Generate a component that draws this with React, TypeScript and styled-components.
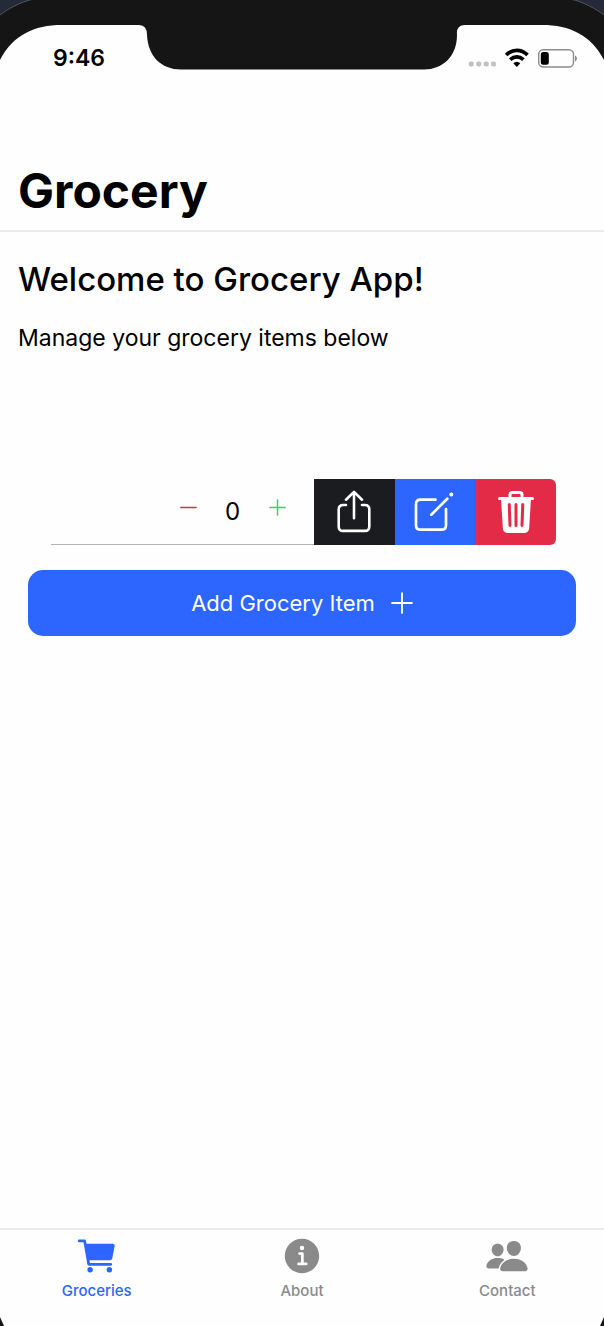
import React, { useState } from "react";
import styled, { createGlobalStyle } from "styled-components";
import { IoCart, IoInformationCircle, IoPeople, IoTrash } from "react-icons/io5";

const color = {
  blue: "#2d66ff",
  red: "#e32b47",
  green: "#2dd36f",
  dark: "#1b1c1f",
  bezel: "#151515",
  muted: "#8a8a8a",
};

const GlobalStyle = createGlobalStyle`
  *, *::before, *::after { box-sizing: border-box; }
  body {
    margin: 0;
    background: #fefefe;
    color: #000;
    font-family: Inter, "Liberation Sans", sans-serif;
  }
  button, input { font: inherit; color: inherit; }
`;

const Screen = styled.div`
  position: relative;
  display: flex;
  flex-direction: column;
  min-height: 100vh;
  overflow: hidden;
`;

const Bezel = styled.div`
  position: absolute;
  top: 0;
  left: 0;
  right: 0;
  height: 25px;
  display: flex;
  justify-content: space-between;
  background: ${color.bezel};
  svg { display: block; flex: none; overflow: visible; }
`;

const BottomCorner = styled.svg<{ $side: "left" | "right" }>`
  position: absolute;
  bottom: 0;
  ${({ $side }) => ($side === "left" ? "left: 0;" : "right: 0; transform: scaleX(-1);")}
`;

const StatusBar = styled.div`
  display: flex;
  justify-content: space-between;
  align-items: center;
  height: 116px;
  padding: 0 26px 0 53px;
  svg { display: block; }
`;

const Time = styled.time`
  font-size: 23px;
  font-weight: 600;
  line-height: 28px;
`;

const Header = styled.header`
  border-bottom: 2px solid #ebebec;
`;

const Title = styled.h1`
  margin: 0;
  padding: 44px 18px 8px;
  font-size: 48px;
  line-height: 62px;
  font-weight: 700;
`;

const Main = styled.main`
  flex: 1;
  padding: 24px 18px;
`;

const Welcome = styled.h2`
  margin: 0;
  font-size: 33px;
  line-height: 46px;
  font-weight: 500;
`;

const Intro = styled.p`
  margin: 20px 0 0;
  font-size: 23px;
  line-height: 32px;
`;

const List = styled.ul`
  list-style: none;
  margin: 125px 30px 0 33px;
  padding: 0;
`;

const Item = styled.li`
  display: flex;
  height: 66px;
`;

const ItemFields = styled.div`
  flex: 1;
  min-width: 0;
  display: flex;
  align-items: center;
  padding-right: 15px;
  border-bottom: 1px solid #b4b4b8;
`;

const NameInput = styled.input`
  flex: 1;
  min-width: 0;
  height: 100%;
  padding: 0;
  border: 0;
  outline: 0;
  background: transparent;
  font-size: 23px;
`;

const StepButton = styled.button<{ $tint: string }>`
  display: grid;
  place-items: center;
  width: 44px;
  height: 44px;
  margin-bottom: 8px;
  padding: 0;
  border: 0;
  background: transparent;
  color: ${({ $tint }) => $tint};
`;

const Quantity = styled.output`
  width: 45px;
  font-size: 24px;
  line-height: 32px;
  text-align: center;
`;

const Actions = styled.div`
  flex: none;
  display: grid;
  grid-template-columns: repeat(3, 1fr);
  width: 242px;
  border-radius: 0 6px 6px 0;
  overflow: hidden;
`;

const ActionButton = styled.button<{ $bg: string }>`
  display: grid;
  place-items: center;
  padding: 0;
  border: 0;
  background: ${({ $bg }) => $bg};
  color: #fff;
  svg { display: block; width: 48px; height: 48px; }
`;

const AddButton = styled.button`
  display: flex;
  align-items: center;
  justify-content: center;
  gap: 16px;
  width: calc(100% - 20px);
  height: 66px;
  margin: 25px 10px 0;
  border: 0;
  border-radius: 15px;
  background: ${color.blue};
  color: #fff;
  font-size: 22px;
  line-height: 32px;
`;

const TabBar = styled.nav`
  display: grid;
  grid-template-columns: repeat(3, 1fr);
  column-gap: 12px;
  height: 98px;
  border-top: 2px solid #ebebec;
`;

const Tab = styled.a<{ $active?: boolean }>`
  display: flex;
  flex-direction: column;
  align-items: center;
  gap: 3px;
  padding-top: 4px;
  font-size: 15px;
  line-height: 20px;
  font-weight: 500;
  text-decoration: none;
  color: ${({ $active }) => ($active ? color.blue : color.muted)};
  svg { display: block; width: 44px; height: 44px; }
`;

const CornerShape = () => (
  <>
    <path d="M0 0H70V25H62C34 25 13 35 0 60Z" fill={color.bezel} />
    <path d="M0 0H33C20 3 8 9 0 15Z" fill="#242a37" />
    <path d="M33 -1C20 2 8 9 0 15" fill="none" stroke="#505256" />
  </>
);

const DeviceBezel = () => (
  <Bezel aria-hidden="true">
    <svg width="70" height="62" viewBox="0 0 70 62"><CornerShape /></svg>
    <svg width="328" height="70" viewBox="0 0 328 70">
      <path
        d="M0 0H328V25H327Q318 25 319 35C319 56 305 69.500 286 69.500H43C23 69.500 10 56 9 35Q9 25 1 25H0Z"
        fill={color.bezel}
      />
    </svg>
    <svg width="70" height="62" viewBox="0 0 70 62">
      <g transform="matrix(-1 0 0 1 70 0)"><CornerShape /></g>
    </svg>
  </Bezel>
);

const StatusIcons = () => (
  <svg width="110" height="20" viewBox="0 0 110 20" role="img" aria-label="Signal, Wi-Fi and battery">
    <g fill="#c2c2c3">
      <rect x="0.700" y="13.500" width="5" height="5" rx="1.800" />
      <rect x="8.200" y="13.500" width="5" height="5" rx="1.800" />
      <rect x="15.700" y="13.500" width="5" height="5" rx="1.800" />
      <rect x="23" y="13.500" width="5" height="5" rx="1.800" />
    </g>
    <g fill="none" stroke="#000" strokeWidth="3.700">
      <path d="M38.200 7C44.300 .8 53.300 .8 59.500 7" />
      <path d="M42.200 11.600C46.300 8 51.300 8 55.400 11.600" />
    </g>
    <path d="M45.300 15.300C47.500 13.300 50.100 13.300 52.300 15.300L48.800 19Z" />
    <rect x="70.700" y="1.700" width="34.800" height="17.300" rx="4.500" fill="none" stroke="#8c8c8c" strokeWidth="1.400" />
    <rect x="72.800" y="4" width="8" height="12.700" rx="2.500" />
    <path d="M107 7.500C109.600 8.500 109.600 12.500 107 13.500Z" fill="#8c8c8c" />
  </svg>
);

const Plus = ({ size, stroke }: { size: number; stroke: number }) => (
  <svg width={size} height={size} viewBox="0 0 20 20" fill="none" stroke="currentColor" strokeWidth={stroke} strokeLinecap="round" aria-hidden="true">
    <path d="M1 10H19M10 1V19" />
  </svg>
);

const Minus = () => (
  <svg width="17" height="17" viewBox="0 0 20 20" fill="none" stroke="currentColor" strokeWidth="1.700" strokeLinecap="round" aria-hidden="true">
    <path d="M1 10H19" />
  </svg>
);

const ShareIcon = () => (
  <svg viewBox="0 0 48 48" fill="none" stroke="currentColor" strokeWidth="2.600" strokeLinecap="round" strokeLinejoin="round" aria-hidden="true">
    <path d="M16 17H13.200Q8.700 17 8.700 21.500V38.400Q8.700 42.900 13.200 42.900H34.800Q39.300 42.900 39.300 38.400V21.500Q39.300 17 34.800 17H32" />
    <path d="M24 30.300V4.200M16 11.700L24 3.900L32 11.700" />
  </svg>
);

const EditIcon = () => (
  <svg viewBox="0 0 48 48" fill="none" stroke="currentColor" strokeWidth="2.700" strokeLinecap="round" strokeLinejoin="round" aria-hidden="true">
    <path d="M24.500 11.700H9.500Q5 11.700 5 16.200V37.200Q5 41.700 9.500 41.700H30.500Q35 41.700 35 37.200V21" />
    <path d="M36.300 10.700L20.300 26.700" />
    <circle cx="40.300" cy="6.600" r="2" fill="currentColor" stroke="none" />
  </svg>
);

export default function App() {
  const [name, setName] = useState("");
  const [count, setCount] = useState(0);

  return (
    <>
      <GlobalStyle />
      <Screen>
        <Header>
          <StatusBar>
            <Time>9:46</Time>
            <StatusIcons />
          </StatusBar>
          <Title>Grocery</Title>
        </Header>
        <Main>
          <Welcome>Welcome to Grocery App!</Welcome>
          <Intro>Manage your grocery items below</Intro>
          <List>
            <Item>
              <ItemFields>
                <NameInput aria-label="Item name" value={name} onChange={(e) => setName(e.target.value)} />
                <StepButton type="button" $tint={color.red} aria-label="Decrease" onClick={() => setCount(Math.max(0, count - 1))}>
                  <Minus />
                </StepButton>
                <Quantity>{count}</Quantity>
                <StepButton type="button" $tint={color.green} aria-label="Increase" onClick={() => setCount(count + 1)}>
                  <Plus size={17} stroke={1.7} />
                </StepButton>
              </ItemFields>
              <Actions>
                <ActionButton type="button" $bg={color.dark} aria-label="Share"><ShareIcon /></ActionButton>
                <ActionButton type="button" $bg={color.blue} aria-label="Edit"><EditIcon /></ActionButton>
                <ActionButton type="button" $bg={color.red} aria-label="Delete"><IoTrash /></ActionButton>
              </Actions>
            </Item>
          </List>
          <AddButton type="button">
            Add Grocery Item
            <Plus size={22} stroke={1.7} />
          </AddButton>
        </Main>
        <TabBar aria-label="Main">
          <Tab href="#groceries" $active><IoCart />Groceries</Tab>
          <Tab href="#about"><IoInformationCircle />About</Tab>
          <Tab href="#contact"><IoPeople />Contact</Tab>
        </TabBar>
        <DeviceBezel />
        <BottomCorner $side="left" width="4" height="9" viewBox="0 0 4 9" aria-hidden="true">
          <path d="M0 0L4 9H0Z" fill={color.bezel} />
        </BottomCorner>
        <BottomCorner $side="right" width="4" height="9" viewBox="0 0 4 9" aria-hidden="true">
          <path d="M0 0L4 9H0Z" fill={color.bezel} />
        </BottomCorner>
      </Screen>
    </>
  );
}
